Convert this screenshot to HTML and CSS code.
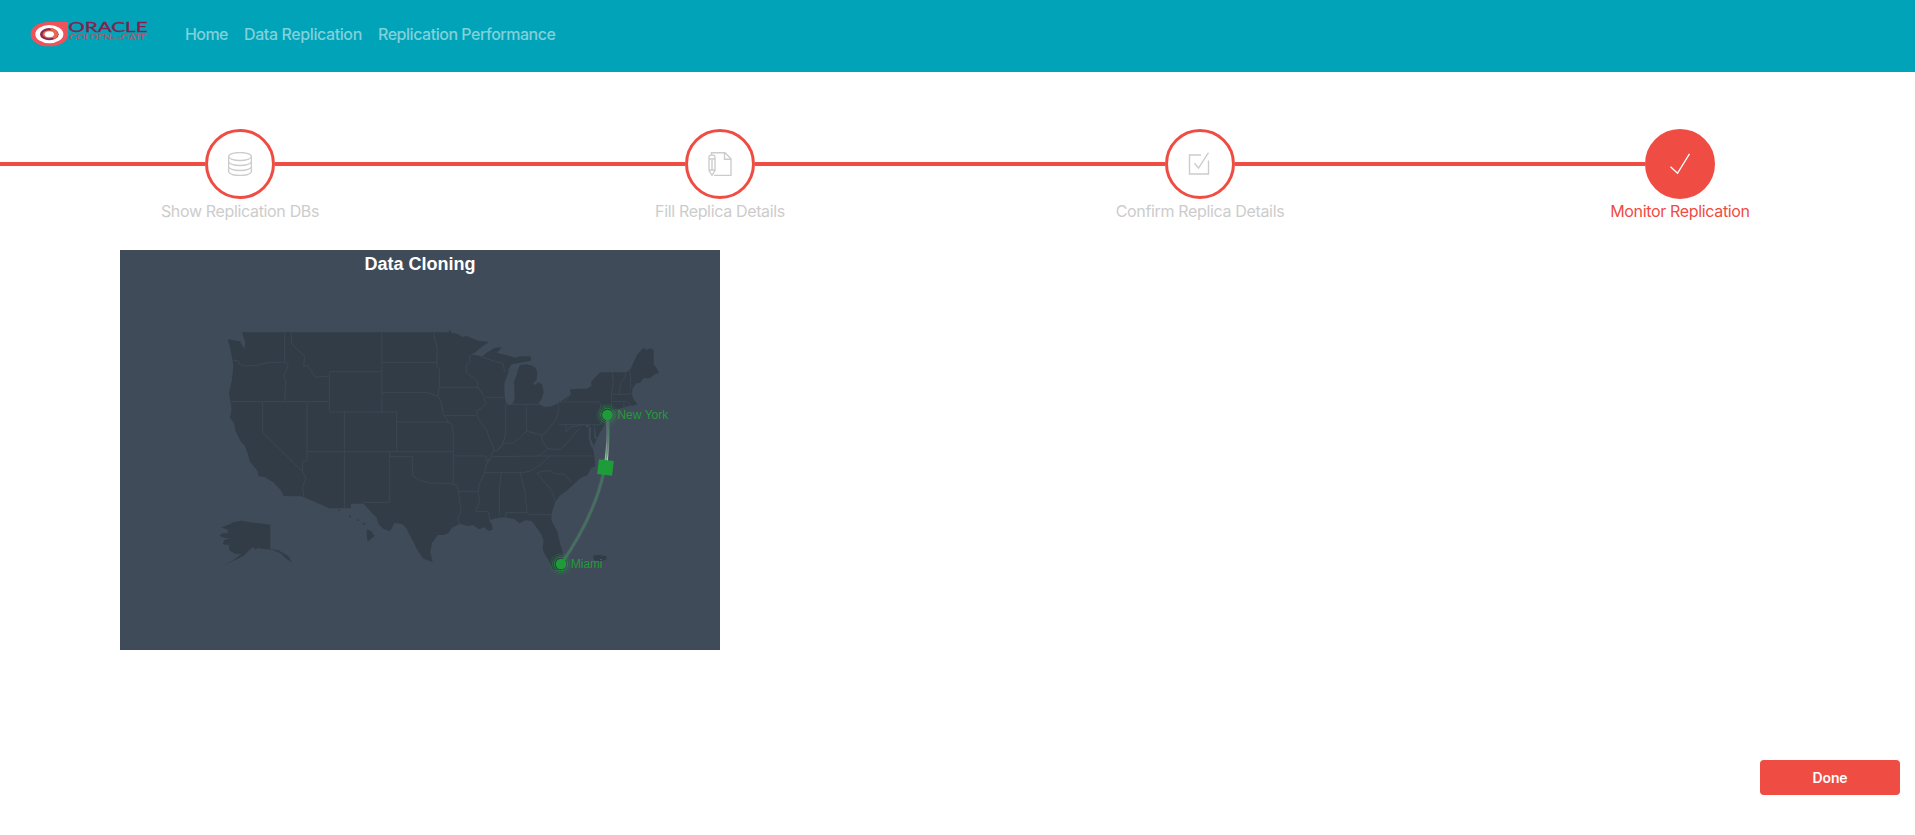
FILE: index.html
```html
<!DOCTYPE html>
<html lang="en">
<head>
<meta charset="utf-8">
<title>Monitor Replication</title>
<link rel="stylesheet" href="styles.css">
</head>
<body>
<header class="navbar">
  <svg class="logo" viewBox="0 0 360 80" width="120" height="27" preserveAspectRatio="none">
    <path d="M123 6H66C32 6 11 22 11 42s21 36 55 36 57-16 57-36z" fill="#ee535c"/>
    <ellipse cx="67" cy="42" rx="42" ry="27" fill="#fff"/>
    <ellipse cx="67" cy="42" rx="28" ry="18" fill="#8d2950"/>
    <path d="M68 24a27 18 0 0 1 15 32L74 51V32Z" fill="#ee6548"/>
    <ellipse cx="67" cy="42" rx="20" ry="12" fill="#e66c57"/>
    <ellipse cx="67" cy="42" rx="14" ry="9" fill="#fff"/>
    <text class="logo-name" x="124" y="36" textLength="238" lengthAdjust="spacingAndGlyphs">ORACLE</text>
    <text class="logo-product" x="127" y="59" textLength="232" lengthAdjust="spacingAndGlyphs">GOLDEN⊷GATE</text>
  </svg>
  <nav class="links">
    <a class="link-home">Home</a>
    <a class="link-data">Data Replication</a>
    <a class="link-perf">Replication Performance</a>
  </nav>
</header>

<main>
  <ol class="steps">
    <li class="step">
      <span class="circle">
        <svg width="24" height="24" viewBox="0 0 24 24"><ellipse cx="12" cy="4.5" rx="11.4" ry="4"/><path d="M.6 4.5v15c0 2.2 5.1 4 11.4 4s11.4-1.8 11.4-4v-15M.6 9.5c0 2.2 5.1 4 11.4 4s11.4-1.8 11.4-4M.6 14.5c0 2.2 5.1 4 11.4 4s11.4-1.8 11.4-4"/></svg>
      </span>
      <span class="label label-show">Show Replication DBs</span>
    </li>
    <li class="step">
      <span class="circle">
        <svg width="24" height="24" viewBox="0 0 24 24"><path d="M3.5 3V.7H17l6 6V23.3H6M16.5.7v6.5H23M1 5.5C1 3 2 3 4 3s3 0 3 2.500V18.500L4 23.3 1 18.500ZM1 7h6M4 8v9.500M1 18h6"/></svg>
      </span>
      <span class="label label-fill">Fill Replica Details</span>
    </li>
    <li class="step">
      <span class="circle">
        <svg width="24" height="24" viewBox="0 0 24 24"><path d="M13 3H1.500v19h19V8.500M6.500 11.300l4 4.700L20.500 .7"/></svg>
      </span>
      <span class="label label-confirm">Confirm Replica Details</span>
    </li>
    <li class="step active">
      <span class="circle">
        <svg width="24" height="24" viewBox="0 0 24 24"><path d="M2.500 14.800l7 6.500L21.500 1.800"/></svg>
      </span>
      <span class="label label-monitor">Monitor Replication</span>
    </li>
  </ol>

  <section class="chart">
    <svg viewBox="0 0 600 400" width="600" height="400">
      <defs>
        <linearGradient id="trail" x1="0" y1="0" x2="0" y2="1">
          <stop offset="0" stop-color="#fff" stop-opacity="0"/>
          <stop offset=".5" stop-color="#fff" stop-opacity=".2"/>
          <stop offset="1" stop-color="#fff" stop-opacity=".7"/>
        </linearGradient>
      </defs>
      <text class="title" x="300" y="20" text-anchor="middle" textLength="111" lengthAdjust="spacingAndGlyphs">Data Cloning</text>
      <g transform="translate(90 70) scale(.33333)">
        <g class="land">
          <!-- Contiguous states -->
          <path d="M96 37H717L719 26 724 38 741 41 757 51 770 48 791 57 806 62 837 66 815 80 795 98 782 104 800 105 815 110 828 100 853 84 876 82 867 92 861 99 889 105 915 113 930 109 962 109 963 122 944 126 920 130 905 133 894 149 882 164 887 158 898 149 890 172 883 190 884 230 888 248 897 255 907 252 914 238 913 207 912 187 921 162 923 151 930 135 950 133 966 137 978 145 982 160 980 179 970 190 973 196 985 187 996 193 1001 216 996 235 985 252 1005 261 1025 259 1045 250 1068 234 1083 222 1080 208 1105 206 1130 206 1145 198 1143 185 1157 170 1171 157H1248L1262 147 1270 128 1282 104 1297 87 1303 84 1310 90 1320 85 1331 90V134L1338 140 1347 159 1335 163 1320 175 1300 175 1290 188 1279 190 1267 207 1266 224 1271 238 1282 253 1267 258 1255 257 1235 264 1205 270 1191 285 1190 306 1175 330 1161 354 1149 385 1153 411 1156 438 1142 446 1133 465 1116 472 1098 486 1084 500 1068 514 1049 527 1036 545 1028 570 1024 587 1025 602 1042 635 1050 670 1059 700 1059 735 1053 751 1030 749 1012 714 1003 701 998 685 1001 662 995 645 978 620 965 603 948 600 928 610 913 597 882 592 863 594 838 600 847 617 848 629 835 633 823 622 807 628 790 616 773 618 750 611 725 624 716 639 700 645 684 645 666 669 661 696 668 726 640 716 622 690 610 665 599 645 590 626 576 612 553 609 545 626 539 634 520 626 506 613 499 591 486 579 461 551H423V565H359L275 529 221 528 212 510 190 487 164 471 146 469 142 452 120 425 113 399 104 377 91 362 76 332 72 309 60 293 65 268 57 220 66 180 70 137 63 94 53 58 80 62 90 63 103 88 106 67Z"/>
          <!-- Alaska, Hawaii and Puerto Rico -->
          <path d="M181 614V687L205 691 220 700 234 707 246 727 230 717 210 699 186 689 155 686 144 683 135 689 130 681 118 691 104 705 82 717 58 728 44 734 72 719 94 702 75 701 57 690 58 675 38 673 43 660 61 655 45 654 28 647 38 640 53 640 54 630 34 622 60 613 71 606 94 602 120 607 148 610ZM384 569l7 0 0 4-7 0ZM417 584l7 7-3 2-4-4ZM440 598l8 2 0 2-8 0ZM456 606l12 6-7 3ZM471 628l13 6 9 14-20 17-3-20ZM1149 707l15-3 26 5-2 10-18 5-18-3Z"/>
        </g>
        <g class="water"><path d="M1123 313l18 4-8 4ZM1137 325l6-4-1 36 10 20-5 11-7-20-4-16ZM1155 324l3 27 8 2-2 5-12-4Z"/></g>
        <g class="borders">
          <path d="M224 37V124L235 134 221 170 227 180 224 245M66 120L84 123 90 133 104 138 140 136 176 127H226M63 245H358M158 245V337L278 455M291 245V422L278 424V456L288 474 278 500 281 529M244 37V69L260 87 284 108 281 139 292 136 316 171 358 169M358 155H516M358 155V276H560V395M516 37V276M515 127H684M516 217H650L684 229 693 245 700 284 716 306M403 276V565M291 395H730M560 306H716M539 395V547H459L455 552M539 410H607V467L628 480 657 489 720 490 740 496 745 511 753 575 743 595 748 613M670 37L682 88 680 139 688 147V201L684 229M686 202H804L817 218M782 104L778 117 782 125 769 135 770 158 788 172 801 183 804 202 820 225 828 248 815 264 800 272 806 299 830 329 840 360 851 384 850 396 842 410 829 435 822 464 808 491 804 520 810 543 796 575H836L840 606M702 287H799M709 306L725 310 730 340V490M730 408H829V423L842 420M742 514H804M828 232H883M815 110L850 123 879 130 884 155M887 252V342L878 372 866 390 849 393M890 253H985M949 255V335M1045 246V275L1036 302 1018 323 1003 342 995 345 980 341 950 334 925 357 907 370 884 369 862 388M1045 246H1166L1172 254 1169 275 1181 290 1170 315 1145 313H1045M1065 244L1083 222M1068 314V337L1083 320 1106 317 1123 313 1136 326M1110 326L1097 336 1086 352 1068 372 1052 389 1013 386 997 364 995 345M1013 386L986 408 845 410M986 408H1148M1020 408L993 432 966 451 940 458H824M875 458L868 500V587M931 458L945 517 951 578H887L888 593M951 578L957 584H1024M981 459L994 454 1021 452 1034 462H1063L1084 488M981 459L999 481 1012 496 1028 517 1036 545M1154 313V354H1166M1207 157L1210 190 1205 222 1204 262M1246 157V170L1232 188 1227 222M1257 147L1262 170V208M1206 223H1250L1263 220M1205 244H1250L1266 258M1242 244V260M1175 254L1190 265"/>
        </g>
      </g>
      <g class="route">
        <path class="route-glow" d="M487 166Q495 237 440.500 315"/>
        <path class="route-trail" d="M486.200 170h3.200Q489.600 190 487.900 212l-3.400-.3Q487.300 190 486.200 170Z" fill="url(#trail)"/>
        <path class="route-line" d="M487 166Q495 237 440.500 315"/>
        <rect x="-7.500" y="-7.500" width="15" height="15" transform="translate(485.500 217.500) rotate(7)"/>
      </g>
      <g class="city" transform="translate(487.400 165)">
        <circle class="dot" r="5.300"/><circle class="ring" r="6.800"/><circle class="ring mid" r="8.500"/><circle class="ring far" r="10.500"/>
        <text x="10" y="4" textLength="51" lengthAdjust="spacingAndGlyphs">New York</text>
      </g>
      <g class="city" transform="translate(441 314)">
        <circle class="dot" r="5.300"/><circle class="ring" r="6.800"/><circle class="ring mid" r="8.500"/><circle class="ring far" r="10.500"/>
        <text x="10" y="4" textLength="31.500" lengthAdjust="spacingAndGlyphs">Miami</text>
      </g>
    </svg>
  </section>

  <div class="actions"><button class="done">Done</button></div>
</main>
</body>
</html>
```
FILE: styles.css
```css
* { box-sizing: border-box; }

body {
  margin: 0;
  background: #fff;
  font-family: Inter, "Liberation Sans", sans-serif;
  font-size: 16px;
  overflow-x: hidden;
}

.navbar {
  display: flex;
  align-items: flex-start;
  height: 72px;
  padding: 20px 27px 0;
  background: #00a3b7;
}

.logo { flex: none; overflow: visible; }
.logo-name { font: 38px Lato, sans-serif; fill: #85204f; stroke: #85204f; stroke-width: 1; }
.logo-product { font: 21px Lato, "DejaVu Sans", sans-serif; fill: #a85a6c; stroke: #a85a6c; stroke-width: .6; }

.links {
  display: flex;
  gap: 16px;
  margin-left: 38px;
  padding-top: 2px;
  line-height: 24px;
  font-weight: 500;
  color: #80d1db;
}
.links a { white-space: nowrap; }
.link-home { width: 43px; letter-spacing: -.6px; }
.link-data { width: 118px; letter-spacing: -.4px; }
.link-perf { letter-spacing: -.47px; }

.steps {
  display: flex;
  width: 1920px;
  margin: 0;
  padding: 57px 0 0;
  list-style: none;
}

.step {
  display: grid;
  grid-template: 70px 24px / 1fr 70px 1fr;
  width: 480px;
  color: #ccc;
}
.step::before,
.step::after {
  content: "";
  height: 4px;
  margin-top: 33px;
  background: #ef4c43;
  grid-row: 1;
}
.step::before { grid-column: 1; }
.step::after { grid-column: 3; }
.step.active::after { background: none; }

.circle {
  grid-area: 1 / 2;
  display: flex;
  align-items: center;
  justify-content: center;
  border: 3px solid #ef4c43;
  border-radius: 50%;
}
.circle svg { fill: none; stroke: #ccc; stroke-width: 1.35; }
.active .circle { background: #ef4c43; }
.active .circle svg { stroke: #fff; }

.label {
  grid-area: 2 / 1 / 3 / 4;
  justify-self: center;
  line-height: 24px;
  white-space: nowrap;
  letter-spacing: -.34px;
}
.active .label { color: #ef4c43; }

.chart {
  width: 600px;
  height: 400px;
  margin: 27px 0 0 120px;
  background: #3f4b59;
}
.chart svg { display: block; }
.title { font: bold 18px "Liberation Sans", Arial, sans-serif; fill: #fff; }
.land { fill: #313c46; }
.water { fill: #3f4b59; }
.borders { fill: none; stroke: #3a4652; stroke-width: 3; stroke-linejoin: round; }

.route { fill: #1f9c3a; }
.route-glow { fill: none; stroke: #8a9a98; stroke-width: 3.5; opacity: .25; }
.route-line { fill: none; stroke: #2b8c49; stroke-width: 1.3; opacity: .65; }

.city { fill: #1f9c3a; font: 12px "Liberation Sans", Arial, sans-serif; }
.ring { fill: none; stroke: #1f9c3a; stroke-width: .9; opacity: .8; }
.mid { opacity: .5; }
.far { opacity: .25; }

.actions {
  display: flex;
  justify-content: flex-end;
  padding: 110px 15px 0 0;
}
.done {
  width: 140px;
  height: 35px;
  border: 0;
  border-radius: 4px;
  background: #ef4c43;
  color: #fff;
  font: 600 14px Inter, sans-serif;
  letter-spacing: -.1px;
}
```
